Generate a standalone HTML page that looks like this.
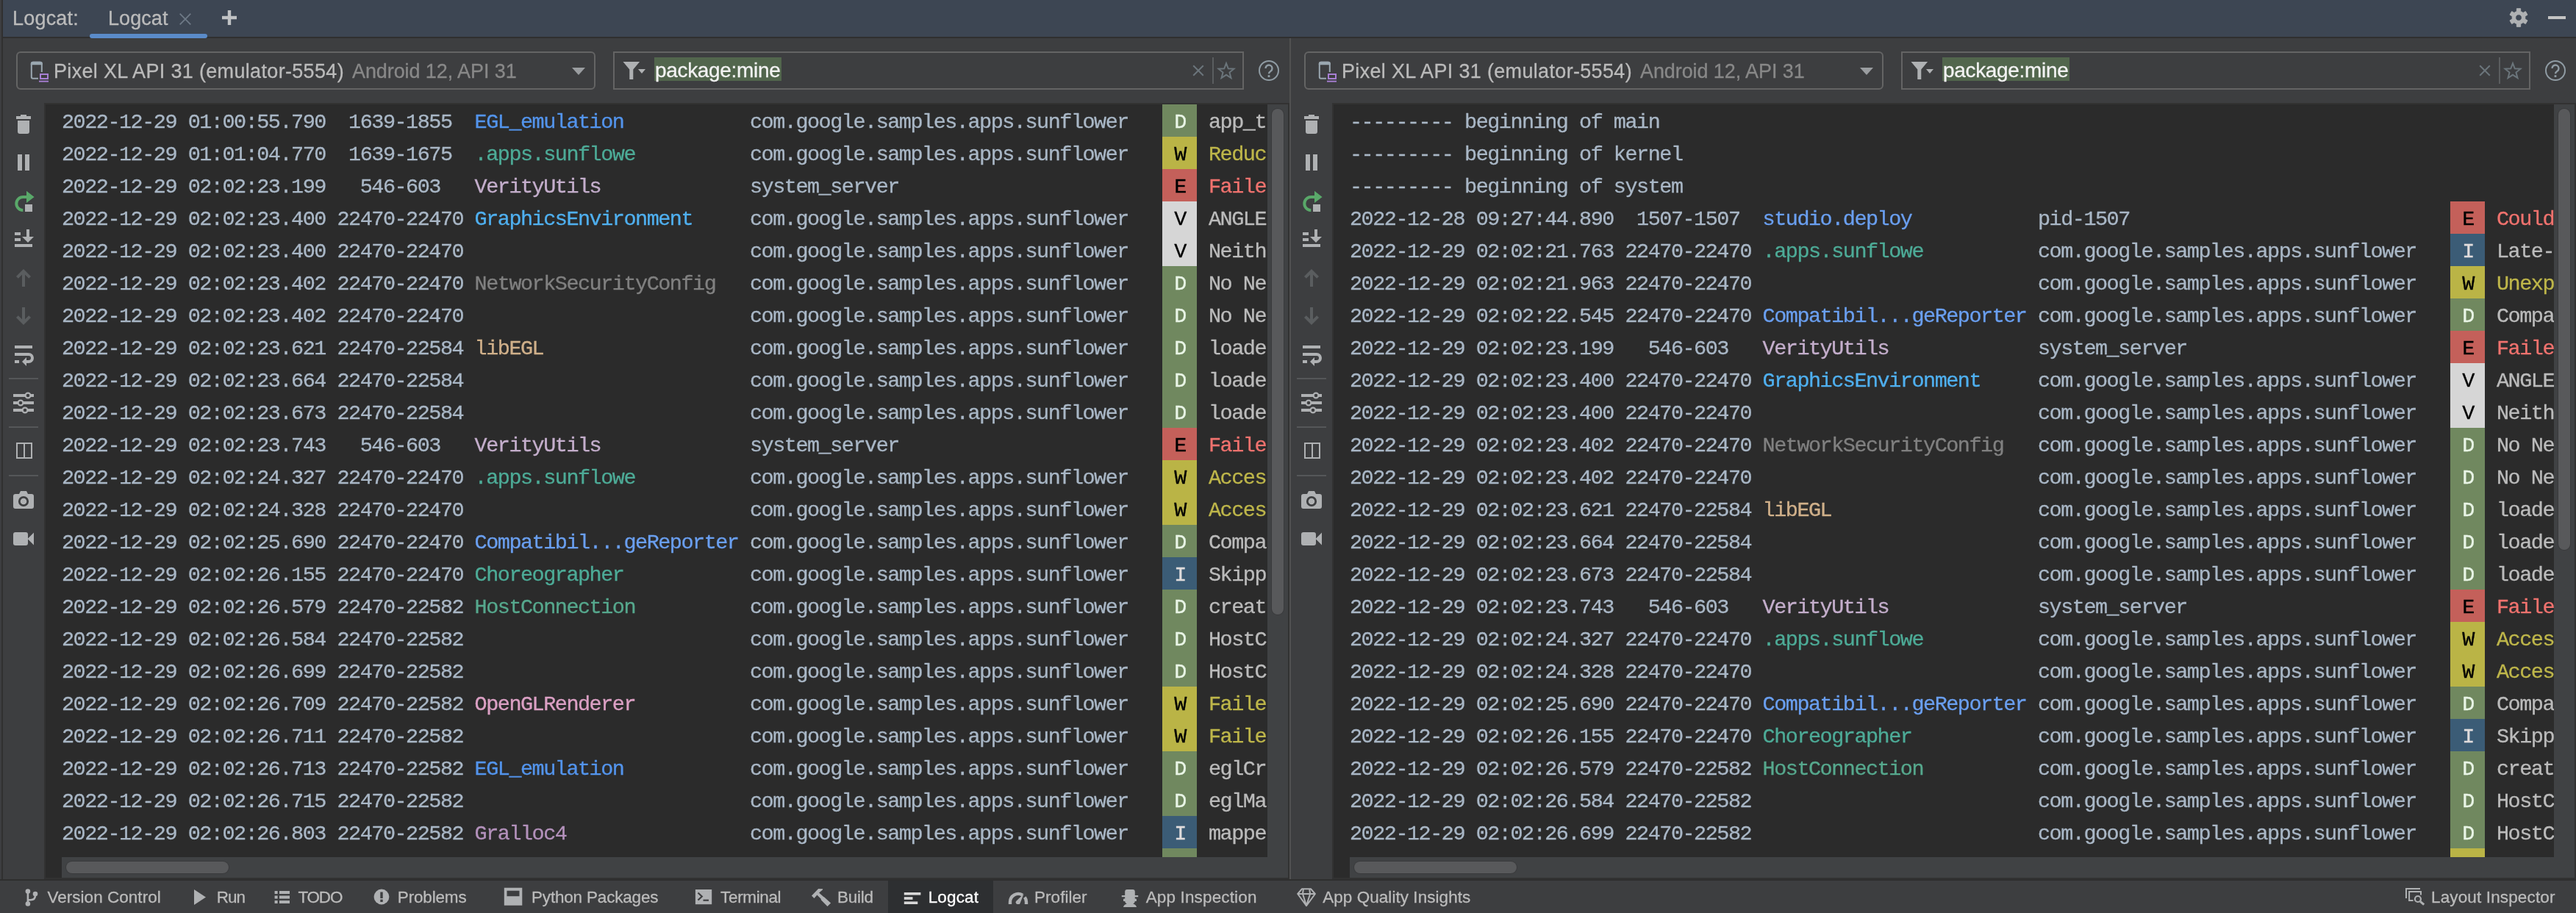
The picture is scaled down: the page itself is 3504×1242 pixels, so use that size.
<!DOCTYPE html>
<html><head><meta charset="utf-8"><title>Logcat</title>
<style>
html,body{margin:0;padding:0}
body{will-change:transform;-webkit-text-stroke-width:0.3px;width:3504px;height:1242px;overflow:hidden;background:#3d3e40;position:relative;font-family:"Liberation Sans",sans-serif}
i{display:block;position:absolute;font-style:normal}
svg{position:absolute;display:block;overflow:visible}
span{position:absolute;white-space:pre}
.title{position:absolute;left:4px;top:0;width:3500px;height:50px;background:#3d4653}
.titleline{left:4px;top:50px;width:3500px;height:2px;background:#303030}
.leftstrip{left:2px;top:0;width:2px;height:1196px;background:#303030}
.s26{font-size:27px;color:#bbbbbb;font-family:"Liberation Sans",sans-serif}
.tabul{left:122px;top:46px;width:160px;height:6px;border-radius:3px;background:#5a8bc9}
.minus{left:3466px;top:22px;width:24px;height:4px;background:#c4c4c4}
.pane{position:absolute;top:0;width:1752px;height:1196px}
.vl{left:2px;top:52px;width:2px;height:1144px}
.combo{position:absolute;left:22px;top:70px;width:784px;height:48px;border:2px solid #646464;border-radius:6px}
.ct1,.ct2{font-size:27px;top:0;line-height:51px}
.ct1{left:49px;color:#bbbbbb}
.ct2{left:455px;color:#888888}
.arrow{left:754px;top:20px;width:0;height:0;border-left:9px solid transparent;border-right:9px solid transparent;border-top:10px solid #9a9da0}
.filter{position:absolute;left:834px;top:70px;height:48px;border:2px solid #646464}
.hl{left:54px;top:6px;width:173px;height:32px;background:#52664d}
.ft{left:55px;top:0;line-height:47px;font-size:28px;color:#f2f2f2}
.fsep{top:6px;width:2px;height:36px;background:#5a5d5f}
.log{position:absolute;left:60px;top:140px;height:1056px;background:#2b2b2b;border:2px solid #323232;box-sizing:border-box;overflow:hidden}
.logi{position:absolute;left:22px;top:0;height:1024px;overflow:hidden}
.r{position:absolute;left:0;height:44px;width:1800px}
.t{left:0;top:3px;line-height:44px;font-family:"Liberation Mono",monospace;font-size:28.5px;letter-spacing:-1.5px;color:#a9b7c6;-webkit-text-stroke-width:0.3px}
.b{left:1497px;top:0;width:47px;height:44px}
.vsb{position:absolute;right:0;top:0;width:28px;height:1052px;background:#404244}
.vsb i{left:6px;top:6px;width:16px;border-radius:8px;background:#58595b;box-shadow:0 0 0 1px #393a3c}
.hsb{position:absolute;left:22px;right:0;bottom:0;height:28px;background:#404244}
.hsb i{left:6px;top:6px;width:221px;height:16px;border-radius:8px;background:#58595b;box-shadow:0 0 0 1px #393a3c}
.tsep{left:12px;width:40px;height:2px;background:#555759}
.bottomline{left:0;top:1196px;width:3504px;height:2px;background:#2e2e2e}
.bottom{position:absolute;left:0;top:1198px;width:3504px;height:44px;background:#3d3e40}
.btab{left:1208px;top:0;width:143px;height:44px;background:#2d2f31}
.bt{font-size:22.5px;color:#bbbbbb;top:1px;line-height:44px}

</style></head>
<body>
<div class="title"></div><i class="titleline"></i>
<i class="leftstrip"></i>
<span class="s26" id="t1" style="left:17px;top:0;line-height:50px;letter-spacing:0.203px">Logcat:</span>
<span class="s26" id="t2" style="left:147px;top:0;line-height:50px;letter-spacing:0.070px">Logcat</span>
<svg style="left:244px;top:18px" width="16" height="16" viewBox="0 0 16 16" ><path d="M0.7 0.7 L15.3 15.3 M15.3 0.7 L0.7 15.3" stroke="#6e7a87" stroke-width="1.8" fill="none"/></svg><svg style="left:302px;top:14px" width="20" height="20" viewBox="0 0 20 20" ><path d="M10 0 V20 M0 10 H20" stroke="#c0c2c4" stroke-width="4.4" fill="none"/></svg><i class="tabul"></i><svg style="left:3411px;top:9px" width="30" height="30" viewBox="0 0 30 30" ><path d="M12.34,6.40 L12.37,2.68 L17.63,2.68 L17.66,6.40 L21.12,8.40 L24.36,6.56 L26.99,11.11 L23.78,13.00 L23.78,17.00 L26.99,18.89 L24.36,23.44 L21.12,21.60 L17.66,23.60 L17.63,27.32 L12.37,27.32 L12.34,23.60 L8.88,21.60 L5.64,23.44 L3.01,18.89 L6.22,17.00 L6.22,13.00 L3.01,11.11 L5.64,6.56 L8.88,8.40 z M19.3 15 a4.3 4.3 0 1 0 -8.6 0 a4.3 4.3 0 1 0 8.6 0 z" fill="#afb1b3" fill-rule="evenodd" stroke="#afb1b3" stroke-width="1" stroke-linejoin="round"/></svg><i class="minus"></i>
<div class="pane" style="left:0px">
<i class="vl" style="background:#303030"></i>
<div class="combo"><svg style="left:17px;top:11px" width="28" height="30" viewBox="0 0 28 30" ><path d="M15.8 15 V3.7 a2 2 0 0 0 -2 -2 H3.8 a2 2 0 0 0 -2 2 V21.8 a2 2 0 0 0 2 2 H11" fill="none" stroke="#9aa7b0" stroke-width="2"/><path d="M0.8 5.2 V3.7 a3 3 0 0 1 3 -3 h10 a3 3 0 0 1 3 3 V5.2 z" fill="#9aa7b0"/><rect x="14" y="18" width="10" height="6" fill="none" stroke="#a77fd3" stroke-width="2"/><rect x="12" y="26.7" width="13" height="1.9" fill="#a77fd3"/></svg><span class="ct1" id="adev" style="letter-spacing:0.332px">Pixel XL API 31 (emulator-5554)</span><span class="ct2" id="aapi" style="letter-spacing:-0.087px">Android 12, API 31</span><i class="arrow"></i></div>
<div class="filter" style="width:854px"><svg style="left:11px;top:11px" width="34" height="28" viewBox="0 0 34 28" ><path d="M0.5 1 h22.6 l-8.8 10.5 v13.5 h-5 v-13.5 z" fill="#afb1b3"/><path d="M21 11 h10 l-5 6 z" fill="#afb1b3"/></svg><i class="hl"></i><span class="ft" id="aflt" style="letter-spacing:-0.320px">package:mine</span><svg style="left:786px;top:16px" width="16" height="16" viewBox="0 0 16 16" ><path d="M1.2 1.2 L14.8 14.8 M14.8 1.2 L1.2 14.8" stroke="#6b757b" stroke-width="2" fill="none"/></svg><i class="fsep" style="left:813px"></i><svg style="left:817px;top:10px" width="30" height="30" viewBox="0 0 30 30" ><polygon points="15.00,4.10 17.76,11.30 25.46,11.70 19.47,16.55 21.47,24.00 15.00,19.80 8.53,24.00 10.53,16.55 4.54,11.70 12.24,11.30" fill="none" stroke="#6b757b" stroke-width="2"/></svg></div>
<svg style="left:1711px;top:81px" width="30" height="30" viewBox="0 0 30 30" ><circle cx="15" cy="15" r="13" fill="none" stroke="#8f9ba3" stroke-width="2"/><path d="M10.5 12 a4.5 4.5 0 1 1 7 3.7 c-1.6 1.1-2.5 1.8-2.5 3.6" fill="none" stroke="#8f9ba3" stroke-width="2.4"/><rect x="13.6" y="21.2" width="2.8" height="2.8" fill="#8f9ba3"/></svg>
<svg style="left:20px;top:154px" width="24" height="30" viewBox="0 0 24 30" ><rect x="8" y="2" width="8" height="3" fill="#afb1b3"/><rect x="2" y="4" width="20" height="4" fill="#afb1b3"/><path d="M4 10 h16 v15 a3 3 0 0 1 -3 3 h-10 a3 3 0 0 1 -3 -3 z" fill="#afb1b3"/></svg><svg style="left:20px;top:208px" width="24" height="26" viewBox="0 0 24 26" ><rect x="4" y="2" width="6" height="22" fill="#afb1b3"/><rect x="14" y="2" width="6" height="22" fill="#afb1b3"/></svg><svg style="left:18px;top:258px" width="30" height="32" viewBox="0 0 30 32" ><path d="M13.3 28 A9 9 0 0 1 13.3 10 H19" fill="none" stroke="#59a869" stroke-width="4"/><path d="M18 1.8 L28.6 10 L18 18 z" fill="#59a869"/><rect x="16" y="20" width="10" height="10" fill="#afb1b3"/></svg><svg style="left:18px;top:310px" width="30" height="28" viewBox="0 0 30 28" ><rect x="2" y="6" width="8" height="4" fill="#afb1b3"/><rect x="2" y="14" width="8" height="4" fill="#afb1b3"/><rect x="2" y="22" width="24" height="4" fill="#afb1b3"/><rect x="18" y="2" width="4" height="11" fill="#afb1b3"/><path d="M12 12 h16 l-8 8 z" fill="#afb1b3"/></svg><svg style="left:20px;top:364px" width="24" height="28" viewBox="0 0 24 28" ><path d="M12 26 V5 M3.4 13.4 L12 4.8 L20.6 13.4" fill="none" stroke="#5a5d5f" stroke-width="4"/></svg><svg style="left:20px;top:416px" width="24" height="28" viewBox="0 0 24 28" ><path d="M12 2 V23 M3.4 14.6 L12 23.2 L20.6 14.6" fill="none" stroke="#5a5d5f" stroke-width="4"/></svg><svg style="left:18px;top:468px" width="30" height="32" viewBox="0 0 30 32" ><rect x="2" y="2" width="24" height="4" fill="#afb1b3"/><rect x="2" y="22" width="6" height="4" fill="#afb1b3"/><path d="M2 14 H21 a5 5 0 0 1 0 10 H17" fill="none" stroke="#afb1b3" stroke-width="4"/><path d="M12 24 L18 18 V30 z" fill="#afb1b3"/></svg><i class="tsep" style="top:514px"></i><svg style="left:16px;top:532px" width="32" height="32" viewBox="0 0 32 32" ><rect x="2" y="4" width="28" height="4" fill="#afb1b3"/><rect x="2" y="14" width="28" height="4" fill="#afb1b3"/><rect x="2" y="24" width="28" height="4" fill="#afb1b3"/><circle cx="22" cy="6" r="3.4" fill="#3d3e40" stroke="#afb1b3" stroke-width="2.2"/><circle cx="12" cy="16" r="3.4" fill="#3d3e40" stroke="#afb1b3" stroke-width="2.2"/><circle cx="18" cy="26" r="3.4" fill="#3d3e40" stroke="#afb1b3" stroke-width="2.2"/></svg><i class="tsep" style="top:580px"></i><svg style="left:20px;top:600px" width="26" height="26" viewBox="0 0 26 26" ><rect x="3" y="3" width="20" height="20" fill="none" stroke="#afb1b3" stroke-width="2"/><rect x="12" y="3" width="2" height="20" fill="#afb1b3"/></svg><i class="tsep" style="top:646px"></i><svg style="left:16px;top:666px" width="32" height="28" viewBox="0 0 32 28" ><path d="M5 6 h5 l2-4 h8 l2 4 h5 a3 3 0 0 1 3 3 v14 a3 3 0 0 1 -3 3 h-22 a3 3 0 0 1 -3 -3 v-14 a3 3 0 0 1 3 -3 z" fill="#afb1b3"/><circle cx="16" cy="16" r="5.7" fill="none" stroke="#3d3e40" stroke-width="2.8"/></svg><svg style="left:16px;top:722px" width="32" height="22" viewBox="0 0 32 22" ><rect x="2" y="2" width="20" height="18" rx="3" fill="#afb1b3"/><path d="M21.5 11 L30 2.5 V19.5 z" fill="#afb1b3"/></svg>
<div class="log" style="width:1694px"><div class="logi" style="width:1640px">
<div class="r" style="top:0px"><span class="t">2022-12-29 01:00:55.790  1639-1855  </span><span class="t" style="left:561.6px;color:#5394ec">EGL_emulation</span><span class="t" style="left:936.0px">com.google.samples.apps.sunflower</span><i class="b" style="background:#70885f"></i><span class="t" style="left:1513.2px;color:#e9f5e6">D</span><span class="t" style="left:1560.0px;color:#bbbbbb">app_t</span></div>
<div class="r" style="top:44px"><span class="t">2022-12-29 01:01:04.770  1639-1675  </span><span class="t" style="left:561.6px;color:#4dab97">.apps.sunflowe</span><span class="t" style="left:936.0px">com.google.samples.apps.sunflower</span><i class="b" style="background:#bab446"></i><span class="t" style="left:1513.2px;color:#000">W</span><span class="t" style="left:1560.0px;color:#beb64a">Reduc</span></div>
<div class="r" style="top:88px"><span class="t">2022-12-29 02:02:23.199   546-603   </span><span class="t" style="left:561.6px;color:#c4aecc">VerityUtils</span><span class="t" style="left:936.0px">system_server</span><i class="b" style="background:#c4605a"></i><span class="t" style="left:1513.2px;color:#000">E</span><span class="t" style="left:1560.0px;color:#f0726e">Faile</span></div>
<div class="r" style="top:132px"><span class="t">2022-12-29 02:02:23.400 22470-22470 </span><span class="t" style="left:561.6px;color:#4fb0f0">GraphicsEnvironment</span><span class="t" style="left:936.0px">com.google.samples.apps.sunflower</span><i class="b" style="background:#d6d6d6"></i><span class="t" style="left:1513.2px;color:#000">V</span><span class="t" style="left:1560.0px;color:#bbbbbb">ANGLE</span></div>
<div class="r" style="top:176px"><span class="t">2022-12-29 02:02:23.400 22470-22470 </span><span class="t" style="left:936.0px">com.google.samples.apps.sunflower</span><i class="b" style="background:#d6d6d6"></i><span class="t" style="left:1513.2px;color:#000">V</span><span class="t" style="left:1560.0px;color:#bbbbbb">Neith</span></div>
<div class="r" style="top:220px"><span class="t">2022-12-29 02:02:23.402 22470-22470 </span><span class="t" style="left:561.6px;color:#808080">NetworkSecurityConfig</span><span class="t" style="left:936.0px">com.google.samples.apps.sunflower</span><i class="b" style="background:#70885f"></i><span class="t" style="left:1513.2px;color:#e9f5e6">D</span><span class="t" style="left:1560.0px;color:#bbbbbb">No Net</span></div>
<div class="r" style="top:264px"><span class="t">2022-12-29 02:02:23.402 22470-22470 </span><span class="t" style="left:936.0px">com.google.samples.apps.sunflower</span><i class="b" style="background:#70885f"></i><span class="t" style="left:1513.2px;color:#e9f5e6">D</span><span class="t" style="left:1560.0px;color:#bbbbbb">No Net</span></div>
<div class="r" style="top:308px"><span class="t">2022-12-29 02:02:23.621 22470-22584 </span><span class="t" style="left:561.6px;color:#d0b08a">libEGL</span><span class="t" style="left:936.0px">com.google.samples.apps.sunflower</span><i class="b" style="background:#70885f"></i><span class="t" style="left:1513.2px;color:#e9f5e6">D</span><span class="t" style="left:1560.0px;color:#bbbbbb">loade</span></div>
<div class="r" style="top:352px"><span class="t">2022-12-29 02:02:23.664 22470-22584 </span><span class="t" style="left:936.0px">com.google.samples.apps.sunflower</span><i class="b" style="background:#70885f"></i><span class="t" style="left:1513.2px;color:#e9f5e6">D</span><span class="t" style="left:1560.0px;color:#bbbbbb">loade</span></div>
<div class="r" style="top:396px"><span class="t">2022-12-29 02:02:23.673 22470-22584 </span><span class="t" style="left:936.0px">com.google.samples.apps.sunflower</span><i class="b" style="background:#70885f"></i><span class="t" style="left:1513.2px;color:#e9f5e6">D</span><span class="t" style="left:1560.0px;color:#bbbbbb">loade</span></div>
<div class="r" style="top:440px"><span class="t">2022-12-29 02:02:23.743   546-603   </span><span class="t" style="left:561.6px;color:#c4aecc">VerityUtils</span><span class="t" style="left:936.0px">system_server</span><i class="b" style="background:#c4605a"></i><span class="t" style="left:1513.2px;color:#000">E</span><span class="t" style="left:1560.0px;color:#f0726e">Faile</span></div>
<div class="r" style="top:484px"><span class="t">2022-12-29 02:02:24.327 22470-22470 </span><span class="t" style="left:561.6px;color:#4dab97">.apps.sunflowe</span><span class="t" style="left:936.0px">com.google.samples.apps.sunflower</span><i class="b" style="background:#bab446"></i><span class="t" style="left:1513.2px;color:#000">W</span><span class="t" style="left:1560.0px;color:#beb64a">Acces</span></div>
<div class="r" style="top:528px"><span class="t">2022-12-29 02:02:24.328 22470-22470 </span><span class="t" style="left:936.0px">com.google.samples.apps.sunflower</span><i class="b" style="background:#bab446"></i><span class="t" style="left:1513.2px;color:#000">W</span><span class="t" style="left:1560.0px;color:#beb64a">Acces</span></div>
<div class="r" style="top:572px"><span class="t">2022-12-29 02:02:25.690 22470-22470 </span><span class="t" style="left:561.6px;color:#6a9ff0">Compatibil...geReporter</span><span class="t" style="left:936.0px">com.google.samples.apps.sunflower</span><i class="b" style="background:#70885f"></i><span class="t" style="left:1513.2px;color:#e9f5e6">D</span><span class="t" style="left:1560.0px;color:#bbbbbb">Compa</span></div>
<div class="r" style="top:616px"><span class="t">2022-12-29 02:02:26.155 22470-22470 </span><span class="t" style="left:561.6px;color:#4dab97">Choreographer</span><span class="t" style="left:936.0px">com.google.samples.apps.sunflower</span><i class="b" style="background:#3b5c76"></i><span class="t" style="left:1513.2px;color:#e0dcdc">I</span><span class="t" style="left:1560.0px;color:#bbbbbb">Skipp</span></div>
<div class="r" style="top:660px"><span class="t">2022-12-29 02:02:26.579 22470-22582 </span><span class="t" style="left:561.6px;color:#56a88d">HostConnection</span><span class="t" style="left:936.0px">com.google.samples.apps.sunflower</span><i class="b" style="background:#70885f"></i><span class="t" style="left:1513.2px;color:#e9f5e6">D</span><span class="t" style="left:1560.0px;color:#bbbbbb">creat</span></div>
<div class="r" style="top:704px"><span class="t">2022-12-29 02:02:26.584 22470-22582 </span><span class="t" style="left:936.0px">com.google.samples.apps.sunflower</span><i class="b" style="background:#70885f"></i><span class="t" style="left:1513.2px;color:#e9f5e6">D</span><span class="t" style="left:1560.0px;color:#bbbbbb">HostC</span></div>
<div class="r" style="top:748px"><span class="t">2022-12-29 02:02:26.699 22470-22582 </span><span class="t" style="left:936.0px">com.google.samples.apps.sunflower</span><i class="b" style="background:#70885f"></i><span class="t" style="left:1513.2px;color:#e9f5e6">D</span><span class="t" style="left:1560.0px;color:#bbbbbb">HostC</span></div>
<div class="r" style="top:792px"><span class="t">2022-12-29 02:02:26.709 22470-22582 </span><span class="t" style="left:561.6px;color:#dba0c4">OpenGLRenderer</span><span class="t" style="left:936.0px">com.google.samples.apps.sunflower</span><i class="b" style="background:#bab446"></i><span class="t" style="left:1513.2px;color:#000">W</span><span class="t" style="left:1560.0px;color:#beb64a">Faile</span></div>
<div class="r" style="top:836px"><span class="t">2022-12-29 02:02:26.711 22470-22582 </span><span class="t" style="left:936.0px">com.google.samples.apps.sunflower</span><i class="b" style="background:#bab446"></i><span class="t" style="left:1513.2px;color:#000">W</span><span class="t" style="left:1560.0px;color:#beb64a">Faile</span></div>
<div class="r" style="top:880px"><span class="t">2022-12-29 02:02:26.713 22470-22582 </span><span class="t" style="left:561.6px;color:#5394ec">EGL_emulation</span><span class="t" style="left:936.0px">com.google.samples.apps.sunflower</span><i class="b" style="background:#70885f"></i><span class="t" style="left:1513.2px;color:#e9f5e6">D</span><span class="t" style="left:1560.0px;color:#bbbbbb">eglCr</span></div>
<div class="r" style="top:924px"><span class="t">2022-12-29 02:02:26.715 22470-22582 </span><span class="t" style="left:936.0px">com.google.samples.apps.sunflower</span><i class="b" style="background:#70885f"></i><span class="t" style="left:1513.2px;color:#e9f5e6">D</span><span class="t" style="left:1560.0px;color:#bbbbbb">eglMa</span></div>
<div class="r" style="top:968px"><span class="t">2022-12-29 02:02:26.803 22470-22582 </span><span class="t" style="left:561.6px;color:#b391bb">Gralloc4</span><span class="t" style="left:936.0px">com.google.samples.apps.sunflower</span><i class="b" style="background:#3b5c76"></i><span class="t" style="left:1513.2px;color:#e0dcdc">I</span><span class="t" style="left:1560.0px;color:#bbbbbb">mappe</span></div>
<div class="r" style="top:1012px"><i class="b" style="background:#70885f"></i></div>
</div>
<div class="vsb"><i style="height:688px"></i></div>
<div class="hsb"><i></i></div>
</div>
</div>

<div class="pane" style="left:1752px">
<i class="vl" style="background:#515151"></i>
<div class="combo"><svg style="left:17px;top:11px" width="28" height="30" viewBox="0 0 28 30" ><path d="M15.8 15 V3.7 a2 2 0 0 0 -2 -2 H3.8 a2 2 0 0 0 -2 2 V21.8 a2 2 0 0 0 2 2 H11" fill="none" stroke="#9aa7b0" stroke-width="2"/><path d="M0.8 5.2 V3.7 a3 3 0 0 1 3 -3 h10 a3 3 0 0 1 3 3 V5.2 z" fill="#9aa7b0"/><rect x="14" y="18" width="10" height="6" fill="none" stroke="#a77fd3" stroke-width="2"/><rect x="12" y="26.7" width="13" height="1.9" fill="#a77fd3"/></svg><span class="ct1" id="bdev" style="letter-spacing:0.332px">Pixel XL API 31 (emulator-5554)</span><span class="ct2" id="bapi" style="letter-spacing:-0.087px">Android 12, API 31</span><i class="arrow"></i></div>
<div class="filter" style="width:852px"><svg style="left:11px;top:11px" width="34" height="28" viewBox="0 0 34 28" ><path d="M0.5 1 h22.6 l-8.8 10.5 v13.5 h-5 v-13.5 z" fill="#afb1b3"/><path d="M21 11 h10 l-5 6 z" fill="#afb1b3"/></svg><i class="hl"></i><span class="ft" id="bflt" style="letter-spacing:-0.320px">package:mine</span><svg style="left:784px;top:16px" width="16" height="16" viewBox="0 0 16 16" ><path d="M1.2 1.2 L14.8 14.8 M14.8 1.2 L1.2 14.8" stroke="#6b757b" stroke-width="2" fill="none"/></svg><i class="fsep" style="left:811px"></i><svg style="left:815px;top:10px" width="30" height="30" viewBox="0 0 30 30" ><polygon points="15.00,4.10 17.76,11.30 25.46,11.70 19.47,16.55 21.47,24.00 15.00,19.80 8.53,24.00 10.53,16.55 4.54,11.70 12.24,11.30" fill="none" stroke="#6b757b" stroke-width="2"/></svg></div>
<svg style="left:1709px;top:81px" width="30" height="30" viewBox="0 0 30 30" ><circle cx="15" cy="15" r="13" fill="none" stroke="#8f9ba3" stroke-width="2"/><path d="M10.5 12 a4.5 4.5 0 1 1 7 3.7 c-1.6 1.1-2.5 1.8-2.5 3.6" fill="none" stroke="#8f9ba3" stroke-width="2.4"/><rect x="13.6" y="21.2" width="2.8" height="2.8" fill="#8f9ba3"/></svg>
<svg style="left:20px;top:154px" width="24" height="30" viewBox="0 0 24 30" ><rect x="8" y="2" width="8" height="3" fill="#afb1b3"/><rect x="2" y="4" width="20" height="4" fill="#afb1b3"/><path d="M4 10 h16 v15 a3 3 0 0 1 -3 3 h-10 a3 3 0 0 1 -3 -3 z" fill="#afb1b3"/></svg><svg style="left:20px;top:208px" width="24" height="26" viewBox="0 0 24 26" ><rect x="4" y="2" width="6" height="22" fill="#afb1b3"/><rect x="14" y="2" width="6" height="22" fill="#afb1b3"/></svg><svg style="left:18px;top:258px" width="30" height="32" viewBox="0 0 30 32" ><path d="M13.3 28 A9 9 0 0 1 13.3 10 H19" fill="none" stroke="#59a869" stroke-width="4"/><path d="M18 1.8 L28.6 10 L18 18 z" fill="#59a869"/><rect x="16" y="20" width="10" height="10" fill="#afb1b3"/></svg><svg style="left:18px;top:310px" width="30" height="28" viewBox="0 0 30 28" ><rect x="2" y="6" width="8" height="4" fill="#afb1b3"/><rect x="2" y="14" width="8" height="4" fill="#afb1b3"/><rect x="2" y="22" width="24" height="4" fill="#afb1b3"/><rect x="18" y="2" width="4" height="11" fill="#afb1b3"/><path d="M12 12 h16 l-8 8 z" fill="#afb1b3"/></svg><svg style="left:20px;top:364px" width="24" height="28" viewBox="0 0 24 28" ><path d="M12 26 V5 M3.4 13.4 L12 4.8 L20.6 13.4" fill="none" stroke="#5a5d5f" stroke-width="4"/></svg><svg style="left:20px;top:416px" width="24" height="28" viewBox="0 0 24 28" ><path d="M12 2 V23 M3.4 14.6 L12 23.2 L20.6 14.6" fill="none" stroke="#5a5d5f" stroke-width="4"/></svg><svg style="left:18px;top:468px" width="30" height="32" viewBox="0 0 30 32" ><rect x="2" y="2" width="24" height="4" fill="#afb1b3"/><rect x="2" y="22" width="6" height="4" fill="#afb1b3"/><path d="M2 14 H21 a5 5 0 0 1 0 10 H17" fill="none" stroke="#afb1b3" stroke-width="4"/><path d="M12 24 L18 18 V30 z" fill="#afb1b3"/></svg><i class="tsep" style="top:514px"></i><svg style="left:16px;top:532px" width="32" height="32" viewBox="0 0 32 32" ><rect x="2" y="4" width="28" height="4" fill="#afb1b3"/><rect x="2" y="14" width="28" height="4" fill="#afb1b3"/><rect x="2" y="24" width="28" height="4" fill="#afb1b3"/><circle cx="22" cy="6" r="3.4" fill="#3d3e40" stroke="#afb1b3" stroke-width="2.2"/><circle cx="12" cy="16" r="3.4" fill="#3d3e40" stroke="#afb1b3" stroke-width="2.2"/><circle cx="18" cy="26" r="3.4" fill="#3d3e40" stroke="#afb1b3" stroke-width="2.2"/></svg><i class="tsep" style="top:580px"></i><svg style="left:20px;top:600px" width="26" height="26" viewBox="0 0 26 26" ><rect x="3" y="3" width="20" height="20" fill="none" stroke="#afb1b3" stroke-width="2"/><rect x="12" y="3" width="2" height="20" fill="#afb1b3"/></svg><i class="tsep" style="top:646px"></i><svg style="left:16px;top:666px" width="32" height="28" viewBox="0 0 32 28" ><path d="M5 6 h5 l2-4 h8 l2 4 h5 a3 3 0 0 1 3 3 v14 a3 3 0 0 1 -3 3 h-22 a3 3 0 0 1 -3 -3 v-14 a3 3 0 0 1 3 -3 z" fill="#afb1b3"/><circle cx="16" cy="16" r="5.7" fill="none" stroke="#3d3e40" stroke-width="2.8"/></svg><svg style="left:16px;top:722px" width="32" height="22" viewBox="0 0 32 22" ><rect x="2" y="2" width="20" height="18" rx="3" fill="#afb1b3"/><path d="M21.5 11 L30 2.5 V19.5 z" fill="#afb1b3"/></svg>
<div class="log" style="width:1692px"><div class="logi" style="width:1638px">
<div class="r" style="top:0px"><span class="t">--------- beginning of main</span></div>
<div class="r" style="top:44px"><span class="t">--------- beginning of kernel</span></div>
<div class="r" style="top:88px"><span class="t">--------- beginning of system</span></div>
<div class="r" style="top:132px"><span class="t">2022-12-28 09:27:44.890  1507-1507  </span><span class="t" style="left:561.6px;color:#6a9ff0">studio.deploy</span><span class="t" style="left:936.0px">pid-1507</span><i class="b" style="background:#c4605a"></i><span class="t" style="left:1513.2px;color:#000">E</span><span class="t" style="left:1560.0px;color:#f0726e">Could</span></div>
<div class="r" style="top:176px"><span class="t">2022-12-29 02:02:21.763 22470-22470 </span><span class="t" style="left:561.6px;color:#4dab97">.apps.sunflowe</span><span class="t" style="left:936.0px">com.google.samples.apps.sunflower</span><i class="b" style="background:#3b5c76"></i><span class="t" style="left:1513.2px;color:#e0dcdc">I</span><span class="t" style="left:1560.0px;color:#bbbbbb">Late-</span></div>
<div class="r" style="top:220px"><span class="t">2022-12-29 02:02:21.963 22470-22470 </span><span class="t" style="left:936.0px">com.google.samples.apps.sunflower</span><i class="b" style="background:#bab446"></i><span class="t" style="left:1513.2px;color:#000">W</span><span class="t" style="left:1560.0px;color:#beb64a">Unexp</span></div>
<div class="r" style="top:264px"><span class="t">2022-12-29 02:02:22.545 22470-22470 </span><span class="t" style="left:561.6px;color:#6a9ff0">Compatibil...geReporter</span><span class="t" style="left:936.0px">com.google.samples.apps.sunflower</span><i class="b" style="background:#70885f"></i><span class="t" style="left:1513.2px;color:#e9f5e6">D</span><span class="t" style="left:1560.0px;color:#bbbbbb">Compa</span></div>
<div class="r" style="top:308px"><span class="t">2022-12-29 02:02:23.199   546-603   </span><span class="t" style="left:561.6px;color:#c4aecc">VerityUtils</span><span class="t" style="left:936.0px">system_server</span><i class="b" style="background:#c4605a"></i><span class="t" style="left:1513.2px;color:#000">E</span><span class="t" style="left:1560.0px;color:#f0726e">Faile</span></div>
<div class="r" style="top:352px"><span class="t">2022-12-29 02:02:23.400 22470-22470 </span><span class="t" style="left:561.6px;color:#4fb0f0">GraphicsEnvironment</span><span class="t" style="left:936.0px">com.google.samples.apps.sunflower</span><i class="b" style="background:#d6d6d6"></i><span class="t" style="left:1513.2px;color:#000">V</span><span class="t" style="left:1560.0px;color:#bbbbbb">ANGLE</span></div>
<div class="r" style="top:396px"><span class="t">2022-12-29 02:02:23.400 22470-22470 </span><span class="t" style="left:936.0px">com.google.samples.apps.sunflower</span><i class="b" style="background:#d6d6d6"></i><span class="t" style="left:1513.2px;color:#000">V</span><span class="t" style="left:1560.0px;color:#bbbbbb">Neith</span></div>
<div class="r" style="top:440px"><span class="t">2022-12-29 02:02:23.402 22470-22470 </span><span class="t" style="left:561.6px;color:#808080">NetworkSecurityConfig</span><span class="t" style="left:936.0px">com.google.samples.apps.sunflower</span><i class="b" style="background:#70885f"></i><span class="t" style="left:1513.2px;color:#e9f5e6">D</span><span class="t" style="left:1560.0px;color:#bbbbbb">No Ne</span></div>
<div class="r" style="top:484px"><span class="t">2022-12-29 02:02:23.402 22470-22470 </span><span class="t" style="left:936.0px">com.google.samples.apps.sunflower</span><i class="b" style="background:#70885f"></i><span class="t" style="left:1513.2px;color:#e9f5e6">D</span><span class="t" style="left:1560.0px;color:#bbbbbb">No Ne</span></div>
<div class="r" style="top:528px"><span class="t">2022-12-29 02:02:23.621 22470-22584 </span><span class="t" style="left:561.6px;color:#d0b08a">libEGL</span><span class="t" style="left:936.0px">com.google.samples.apps.sunflower</span><i class="b" style="background:#70885f"></i><span class="t" style="left:1513.2px;color:#e9f5e6">D</span><span class="t" style="left:1560.0px;color:#bbbbbb">loade</span></div>
<div class="r" style="top:572px"><span class="t">2022-12-29 02:02:23.664 22470-22584 </span><span class="t" style="left:936.0px">com.google.samples.apps.sunflower</span><i class="b" style="background:#70885f"></i><span class="t" style="left:1513.2px;color:#e9f5e6">D</span><span class="t" style="left:1560.0px;color:#bbbbbb">loade</span></div>
<div class="r" style="top:616px"><span class="t">2022-12-29 02:02:23.673 22470-22584 </span><span class="t" style="left:936.0px">com.google.samples.apps.sunflower</span><i class="b" style="background:#70885f"></i><span class="t" style="left:1513.2px;color:#e9f5e6">D</span><span class="t" style="left:1560.0px;color:#bbbbbb">loade</span></div>
<div class="r" style="top:660px"><span class="t">2022-12-29 02:02:23.743   546-603   </span><span class="t" style="left:561.6px;color:#c4aecc">VerityUtils</span><span class="t" style="left:936.0px">system_server</span><i class="b" style="background:#c4605a"></i><span class="t" style="left:1513.2px;color:#000">E</span><span class="t" style="left:1560.0px;color:#f0726e">Faile</span></div>
<div class="r" style="top:704px"><span class="t">2022-12-29 02:02:24.327 22470-22470 </span><span class="t" style="left:561.6px;color:#4dab97">.apps.sunflowe</span><span class="t" style="left:936.0px">com.google.samples.apps.sunflower</span><i class="b" style="background:#bab446"></i><span class="t" style="left:1513.2px;color:#000">W</span><span class="t" style="left:1560.0px;color:#beb64a">Acces</span></div>
<div class="r" style="top:748px"><span class="t">2022-12-29 02:02:24.328 22470-22470 </span><span class="t" style="left:936.0px">com.google.samples.apps.sunflower</span><i class="b" style="background:#bab446"></i><span class="t" style="left:1513.2px;color:#000">W</span><span class="t" style="left:1560.0px;color:#beb64a">Acces</span></div>
<div class="r" style="top:792px"><span class="t">2022-12-29 02:02:25.690 22470-22470 </span><span class="t" style="left:561.6px;color:#6a9ff0">Compatibil...geReporter</span><span class="t" style="left:936.0px">com.google.samples.apps.sunflower</span><i class="b" style="background:#70885f"></i><span class="t" style="left:1513.2px;color:#e9f5e6">D</span><span class="t" style="left:1560.0px;color:#bbbbbb">Compa</span></div>
<div class="r" style="top:836px"><span class="t">2022-12-29 02:02:26.155 22470-22470 </span><span class="t" style="left:561.6px;color:#4dab97">Choreographer</span><span class="t" style="left:936.0px">com.google.samples.apps.sunflower</span><i class="b" style="background:#3b5c76"></i><span class="t" style="left:1513.2px;color:#e0dcdc">I</span><span class="t" style="left:1560.0px;color:#bbbbbb">Skipp</span></div>
<div class="r" style="top:880px"><span class="t">2022-12-29 02:02:26.579 22470-22582 </span><span class="t" style="left:561.6px;color:#56a88d">HostConnection</span><span class="t" style="left:936.0px">com.google.samples.apps.sunflower</span><i class="b" style="background:#70885f"></i><span class="t" style="left:1513.2px;color:#e9f5e6">D</span><span class="t" style="left:1560.0px;color:#bbbbbb">creat</span></div>
<div class="r" style="top:924px"><span class="t">2022-12-29 02:02:26.584 22470-22582 </span><span class="t" style="left:936.0px">com.google.samples.apps.sunflower</span><i class="b" style="background:#70885f"></i><span class="t" style="left:1513.2px;color:#e9f5e6">D</span><span class="t" style="left:1560.0px;color:#bbbbbb">HostC</span></div>
<div class="r" style="top:968px"><span class="t">2022-12-29 02:02:26.699 22470-22582 </span><span class="t" style="left:936.0px">com.google.samples.apps.sunflower</span><i class="b" style="background:#70885f"></i><span class="t" style="left:1513.2px;color:#e9f5e6">D</span><span class="t" style="left:1560.0px;color:#bbbbbb">HostC</span></div>
<div class="r" style="top:1012px"><i class="b" style="background:#bab446"></i></div>
</div>
<div class="vsb"><i style="height:600px"></i></div>
<div class="hsb"><i></i></div>
</div>
</div>

<i class="bottomline"></i><div class="bottom"><i class="btab"></i><svg style="left:33px;top:10px" width="20" height="26" viewBox="0 0 20 26" ><circle cx="4.9" cy="4.6" r="3.3" fill="#afb1b3"/><circle cx="4.9" cy="21.5" r="3.3" fill="#afb1b3"/><circle cx="15" cy="8.1" r="3.3" fill="#afb1b3"/><path d="M4.9 4.6 V21.5 M15 8 V10 Q15 16.2 8.5 16.2 H4.9" fill="none" stroke="#afb1b3" stroke-width="2.6"/></svg><span class="bt" id="b_vc" style="left:64.4px;color:#bbbbbb;letter-spacing:0.037px">Version Control</span><svg style="left:263px;top:11px" width="18" height="23" viewBox="0 0 18 23" ><path d="M1 1 L17 11.5 L1 22 z" fill="#afb1b3"/></svg><span class="bt" id="b_run" style="left:294.8px;color:#bbbbbb;letter-spacing:-1.060px">Run</span><svg style="left:373px;top:13px" width="22" height="19" viewBox="0 0 22 19" ><rect x="0.6" y="1" width="4" height="4" fill="#afb1b3"/><rect x="7" y="1" width="14" height="4" fill="#afb1b3"/><rect x="0.6" y="7.5" width="4" height="4" fill="#afb1b3"/><rect x="7" y="7.5" width="14" height="4" fill="#afb1b3"/><rect x="0.6" y="14" width="4" height="4" fill="#afb1b3"/><rect x="7" y="14" width="14" height="4" fill="#afb1b3"/></svg><span class="bt" id="b_todo" style="left:405.4px;color:#bbbbbb;letter-spacing:-1.198px">TODO</span><svg style="left:508px;top:11px" width="22" height="22" viewBox="0 0 22 22" ><circle cx="11" cy="11" r="10.4" fill="#afb1b3"/><rect x="9.3" y="4.5" width="3.4" height="8.5" fill="#3d3e40"/><rect x="9.3" y="14.6" width="3.4" height="3.4" fill="#3d3e40"/></svg><span class="bt" id="b_prob" style="left:540.8px;color:#bbbbbb;letter-spacing:-0.168px">Problems</span><svg style="left:685px;top:9px" width="26" height="25" viewBox="0 0 26 25" ><rect x="0.8" y="0.7" width="24.5" height="24" fill="#afb1b3"/><rect x="4.5" y="4.7" width="17" height="7.5" fill="#3d3e40"/></svg><span class="bt" id="b_py" style="left:723px;color:#bbbbbb;letter-spacing:-0.188px">Python Packages</span><svg style="left:945px;top:11px" width="24" height="22" viewBox="0 0 24 22" ><rect x="0.9" y="1" width="22.3" height="20.2" fill="#afb1b3"/><path d="M4.5 5.5 L9.8 10.5 L4.5 15.5" fill="none" stroke="#3d3e40" stroke-width="2.2"/><rect x="11.5" y="14.6" width="7.5" height="2.2" fill="#3d3e40"/></svg><span class="bt" id="b_term" style="left:980.1px;color:#bbbbbb;letter-spacing:-0.366px">Terminal</span><svg style="left:1103px;top:9px" width="28" height="26" viewBox="0 0 28 26" ><path d="M1 11.6 L10.2 2 L16.3 2.2 L15.9 3.5 L11.1 7.5 L17 12.7 L18.3 13.4 L27.1 21.5 L22.5 26.1 L14.1 17.6 L13.5 15.4 L8.4 10.5 L4.5 15.1 Z" fill="#afb1b3"/></svg><span class="bt" id="b_build" style="left:1139px;color:#bbbbbb;letter-spacing:-0.269px">Build</span><svg style="left:1229px;top:15px" width="24" height="18" viewBox="0 0 24 18" ><rect x="0.8" y="1" width="22.6" height="3.6" fill="#d8d8d8"/><rect x="0.8" y="7.2" width="11.7" height="3.6" fill="#d8d8d8"/><rect x="0.8" y="13.4" width="18.5" height="3.6" fill="#d8d8d8"/></svg><span class="bt" id="b_logcat" style="left:1262.7px;color:#ffffff;letter-spacing:0.156px">Logcat</span><svg style="left:1371px;top:14px;overflow:hidden" width="28" height="18.3" viewBox="0 0 28 18.3" ><path d="M3 19 V15 A11 11 0 0 1 19.83 5.67" fill="none" stroke="#afb1b3" stroke-width="4.4"/><path d="M22.9 8.53 A11 11 0 0 1 25 15 V19" fill="none" stroke="#afb1b3" stroke-width="4.4"/><path d="M21.6 3.9 L16.48 17.12 A3.1 3.1 0 1 1 11.32 13.68 Z" fill="#afb1b3"/></svg><span class="bt" id="b_prof" style="left:1407px;color:#bbbbbb;letter-spacing:0.040px">Profiler</span><svg style="left:1525px;top:11px" width="24" height="26" viewBox="0 0 24 26" ><path d="M8.2 1.1 H15.8 a3 3 0 0 1 3 3 V17 Q18.8 19.3 16.3 20.5 Q20.4 21.6 21 25 H3 Q3.6 21.6 7.7 20.5 Q5.2 19.3 5.2 17 V4.1 a3 3 0 0 1 3 -3 z" fill="#afb1b3"/><rect x="0.8" y="9" width="22.4" height="2.2" fill="#afb1b3"/><rect x="3" y="13.4" width="18" height="3.7" rx="1.2" fill="#afb1b3"/></svg><span class="bt" id="b_insp" style="left:1558.7px;color:#bbbbbb;letter-spacing:0.146px">App Inspection</span><svg style="left:1763px;top:9px" width="28" height="28" viewBox="0 0 28 28" ><path d="M7.8 2.3 H20.2 L25.9 9 L14 25.2 L2.2 9 z M2.2 9 H25.9 M9.9 2.3 L9 9 L14 25 L19.1 9 L18.2 2.3" fill="none" stroke="#afb1b3" stroke-width="2" stroke-linejoin="round"/></svg><span class="bt" id="b_aqi" style="left:1799.2px;color:#bbbbbb;letter-spacing:0.050px">App Quality Insights</span><svg style="left:3271px;top:9px" width="28" height="26" viewBox="0 0 28 26" ><path d="M2 15 V2.1 H21" fill="none" stroke="#afb1b3" stroke-width="2"/><path d="M22 10.5 V6 H6.1 V17.9 H11.5" fill="none" stroke="#afb1b3" stroke-width="2"/><circle cx="17.9" cy="16" r="4" fill="none" stroke="#afb1b3" stroke-width="2.2"/><path d="M21.2 19.3 L26.2 23.7" stroke="#afb1b3" stroke-width="3"/></svg><span class="bt" id="b_li" style="left:3307px;color:#bbbbbb;letter-spacing:0.140px">Layout Inspector</span></div>
</body></html>
